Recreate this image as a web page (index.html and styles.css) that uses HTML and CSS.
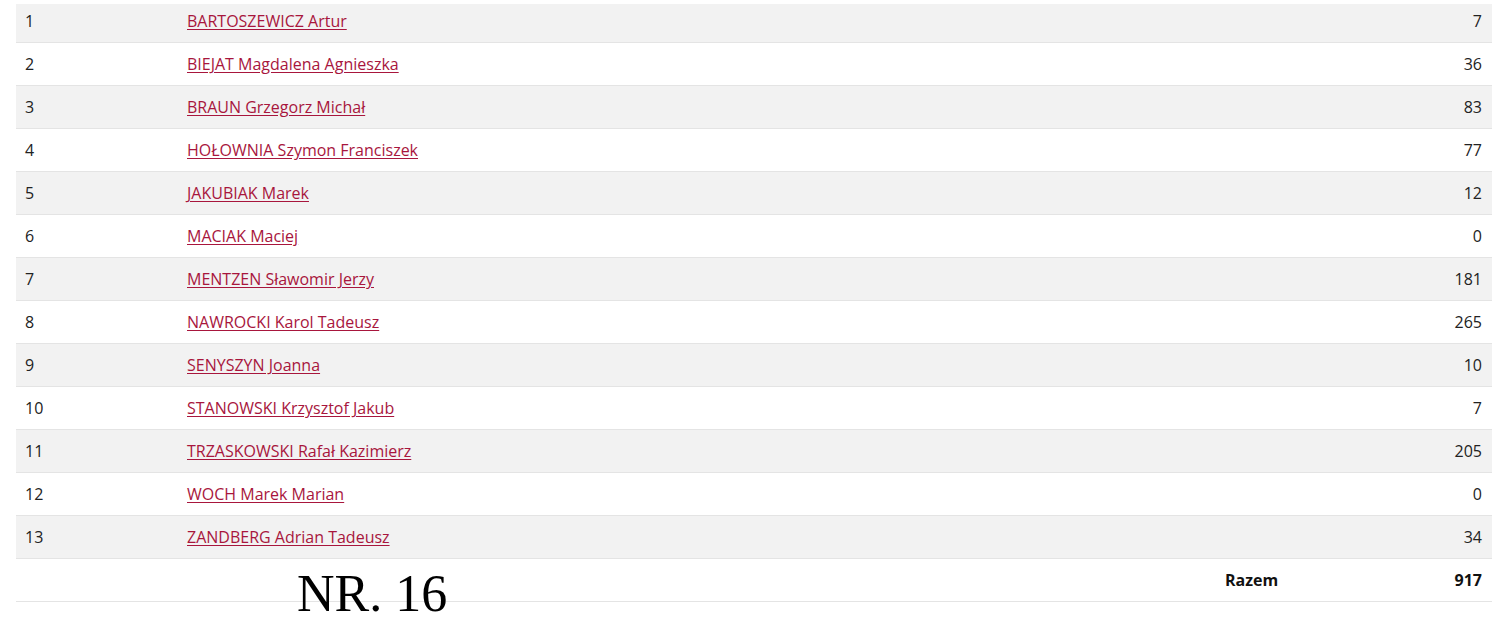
FILE: index.html
```html
<!DOCTYPE html>
<html lang="pl">
<head>
<meta charset="utf-8">
<title>Wyniki</title>
<link rel="stylesheet" href="styles.css">
</head>
<body>
<div class="wrap">
<table class="results">
<colgroup><col class="c-nr"><col class="c-name"><col class="c-label"><col class="c-val"></colgroup>
<tbody>
<tr class="first"><td>1</td><td><a href="#">BARTOSZEWICZ Artur</a></td><td></td><td class="num">7</td></tr>
<tr><td>2</td><td><a href="#">BIEJAT Magdalena Agnieszka</a></td><td></td><td class="num">36</td></tr>
<tr><td>3</td><td><a href="#">BRAUN Grzegorz Michał</a></td><td></td><td class="num">83</td></tr>
<tr><td>4</td><td><a href="#">HOŁOWNIA Szymon Franciszek</a></td><td></td><td class="num">77</td></tr>
<tr><td>5</td><td><a href="#">JAKUBIAK Marek</a></td><td></td><td class="num">12</td></tr>
<tr><td>6</td><td><a href="#">MACIAK Maciej</a></td><td></td><td class="num">0</td></tr>
<tr><td>7</td><td><a href="#">MENTZEN Sławomir Jerzy</a></td><td></td><td class="num">181</td></tr>
<tr><td>8</td><td><a href="#">NAWROCKI Karol Tadeusz</a></td><td></td><td class="num">265</td></tr>
<tr><td>9</td><td><a href="#">SENYSZYN Joanna</a></td><td></td><td class="num">10</td></tr>
<tr><td>10</td><td><a href="#">STANOWSKI Krzysztof Jakub</a></td><td></td><td class="num">7</td></tr>
<tr><td>11</td><td><a href="#">TRZASKOWSKI Rafał Kazimierz</a></td><td></td><td class="num">205</td></tr>
<tr><td>12</td><td><a href="#">WOCH Marek Marian</a></td><td></td><td class="num">0</td></tr>
<tr><td>13</td><td><a href="#">ZANDBERG Adrian Tadeusz</a></td><td></td><td class="num">34</td></tr>
</tbody>
<tfoot>
<tr><td></td><td class="stamp-cell"><span class="stamp">NR. 16</span></td><th>Razem</th><th class="num">917</th></tr>
</tfoot>
</table>
</div>
</body>
</html>
```
FILE: styles.css
```css
html, body {
  margin: 0;
  padding: 0;
  background: #fff;
}
body {
  font-family: "Open Sans", "Liberation Sans", sans-serif;
  font-size: 16px;
  color: #222;
  min-height: 100vh;
}
.wrap {
  padding: 4px 8px 30px 16px;
}
.results {
  width: 100%;
  border-collapse: collapse;
}
.c-nr { width: 162px; }
.c-label { width: 100px; }
.c-val { width: 176px; }
.results td, .results th {
  padding: 10px 9px;
  line-height: 22px;
  text-align: left;
  vertical-align: middle;
  border-top: 1px solid #e4e4e4;
}
.results tr.first td {
  border-top: none;
  padding-top: 6px;
}
.results tbody tr:nth-child(odd) {
  background: #f2f2f2;
}
.results tfoot tr {
  border-bottom: 1px solid #e4e4e4;
}
.results th {
  font-weight: 700;
  color: #111;
  font-size: 16px;
}
.results .num {
  text-align: right;
  padding-right: 10px;
}
.results a {
  color: #a8163d;
  text-decoration: underline;
  text-underline-offset: 2px;
}
.stamp-cell {
  position: relative;
  padding-left: 0;
}
.stamp {
  position: absolute;
  left: 119px;
  top: 9px;
  font-family: "Liberation Serif", "Times New Roman", serif;
  font-size: 52px;
  line-height: 52px;
  color: #000;
  white-space: nowrap;
  z-index: 1;
}
```
